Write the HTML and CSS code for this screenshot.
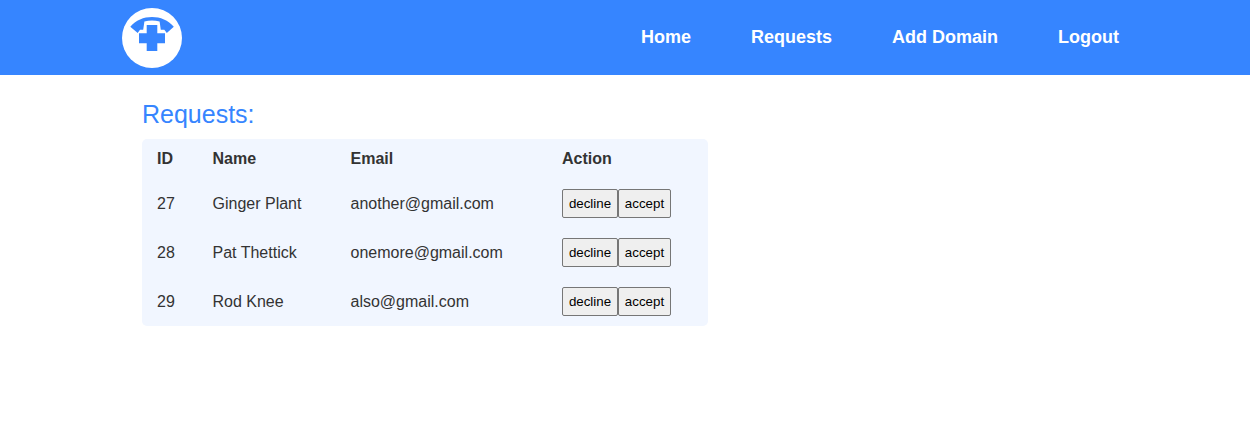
FILE: index.html
```html
<!DOCTYPE html>
<html lang="en">
<head>
<meta charset="utf-8">
<title>Requests</title>
<link rel="stylesheet" href="styles.css">
</head>
<body>
<header class="navbar">
  <svg class="logo" viewBox="0 0 60 60" aria-label="Logo">
    <circle cx="30" cy="30" r="30" fill="#fff"/>
    <path class="mark" d="M8.3 18.7C19 5.8 41 5.8 51.8 18.7L44.8 24.9L42.3 21.8H38.8L37.6 13.4Q30 11.6 22.4 13.4L21.2 21.8H18L15.7 24.9Z"/>
    <path class="mark" d="M24.7 17h10.6v8.3H43v10h-7.7V43H24.7v-7.7H17v-10h7.7z"/>
  </svg>
  <nav class="links">
    <a>Home</a>
    <a>Requests</a>
    <a>Add Domain</a>
    <a>Logout</a>
  </nav>
</header>
<main class="content">
  <h1 class="title">Requests:</h1>
  <table class="requests">
    <thead>
      <tr><th class="id">ID</th><th class="name">Name</th><th class="email">Email</th><th>Action</th></tr>
    </thead>
    <tbody>
      <tr><td>27</td><td class="text">Ginger Plant</td><td class="text">another@gmail.com</td><td><div class="actions"><button class="decline">decline</button><button class="accept">accept</button></div></td></tr>
      <tr><td>28</td><td class="text">Pat Thettick</td><td class="text">onemore@gmail.com</td><td><div class="actions"><button class="decline">decline</button><button class="accept">accept</button></div></td></tr>
      <tr><td>29</td><td class="text">Rod Knee</td><td class="text">also@gmail.com</td><td><div class="actions"><button class="decline">decline</button><button class="accept">accept</button></div></td></tr>
    </tbody>
  </table>
</main>
</body>
</html>
```

FILE: styles.css
```css
* {
  box-sizing: border-box;
}

body {
  margin: 0;
  background: #fff;
  color: #333;
  font-family: "Liberation Sans", Arial, sans-serif;
  font-size: 16px;
}

.navbar {
  display: flex;
  justify-content: space-between;
  height: 75px;
  padding: 8px 131px 0 122px;
  background: #3685ff;
}

.logo {
  width: 60px;
  height: 60px;
}

.mark {
  fill: #3685ff;
}

.links {
  display: flex;
  gap: 60px;
  padding-top: 18px;
  color: #fff;
  font-size: 18px;
  font-weight: bold;
  line-height: 22px;
}

.content {
  padding: 24px 142px 0;
}

.title {
  margin: 0;
  height: 40px;
  color: #3685ff;
  font-size: 25px;
  font-weight: normal;
  line-height: 30px;
}

.requests {
  width: 566px;
  table-layout: fixed;
  border-spacing: 0;
  border-radius: 5px;
  background: #f1f6ff;
}

.requests th,
.requests td {
  padding: 0 0 0 15px;
  text-align: left;
  vertical-align: middle;
}

.requests th {
  height: 40px;
}

.requests td {
  height: 49px;
}

.requests .name,
.requests .email,
.requests .text {
  padding-left: 15.5px;
}

.id {
  width: 55px;
}

.name {
  width: 138px;
}

.email {
  width: 212px;
}

.actions {
  display: flex;
}

.actions button {
  height: 29px;
  padding: 0;
  border: 1px solid #767676;
  border-radius: 2px;
  background: #efefef;
  color: #000;
  font-family: inherit;
  font-size: 13.333px;
}

.decline {
  width: 56px;
}

.accept {
  width: 53px;
}
```
